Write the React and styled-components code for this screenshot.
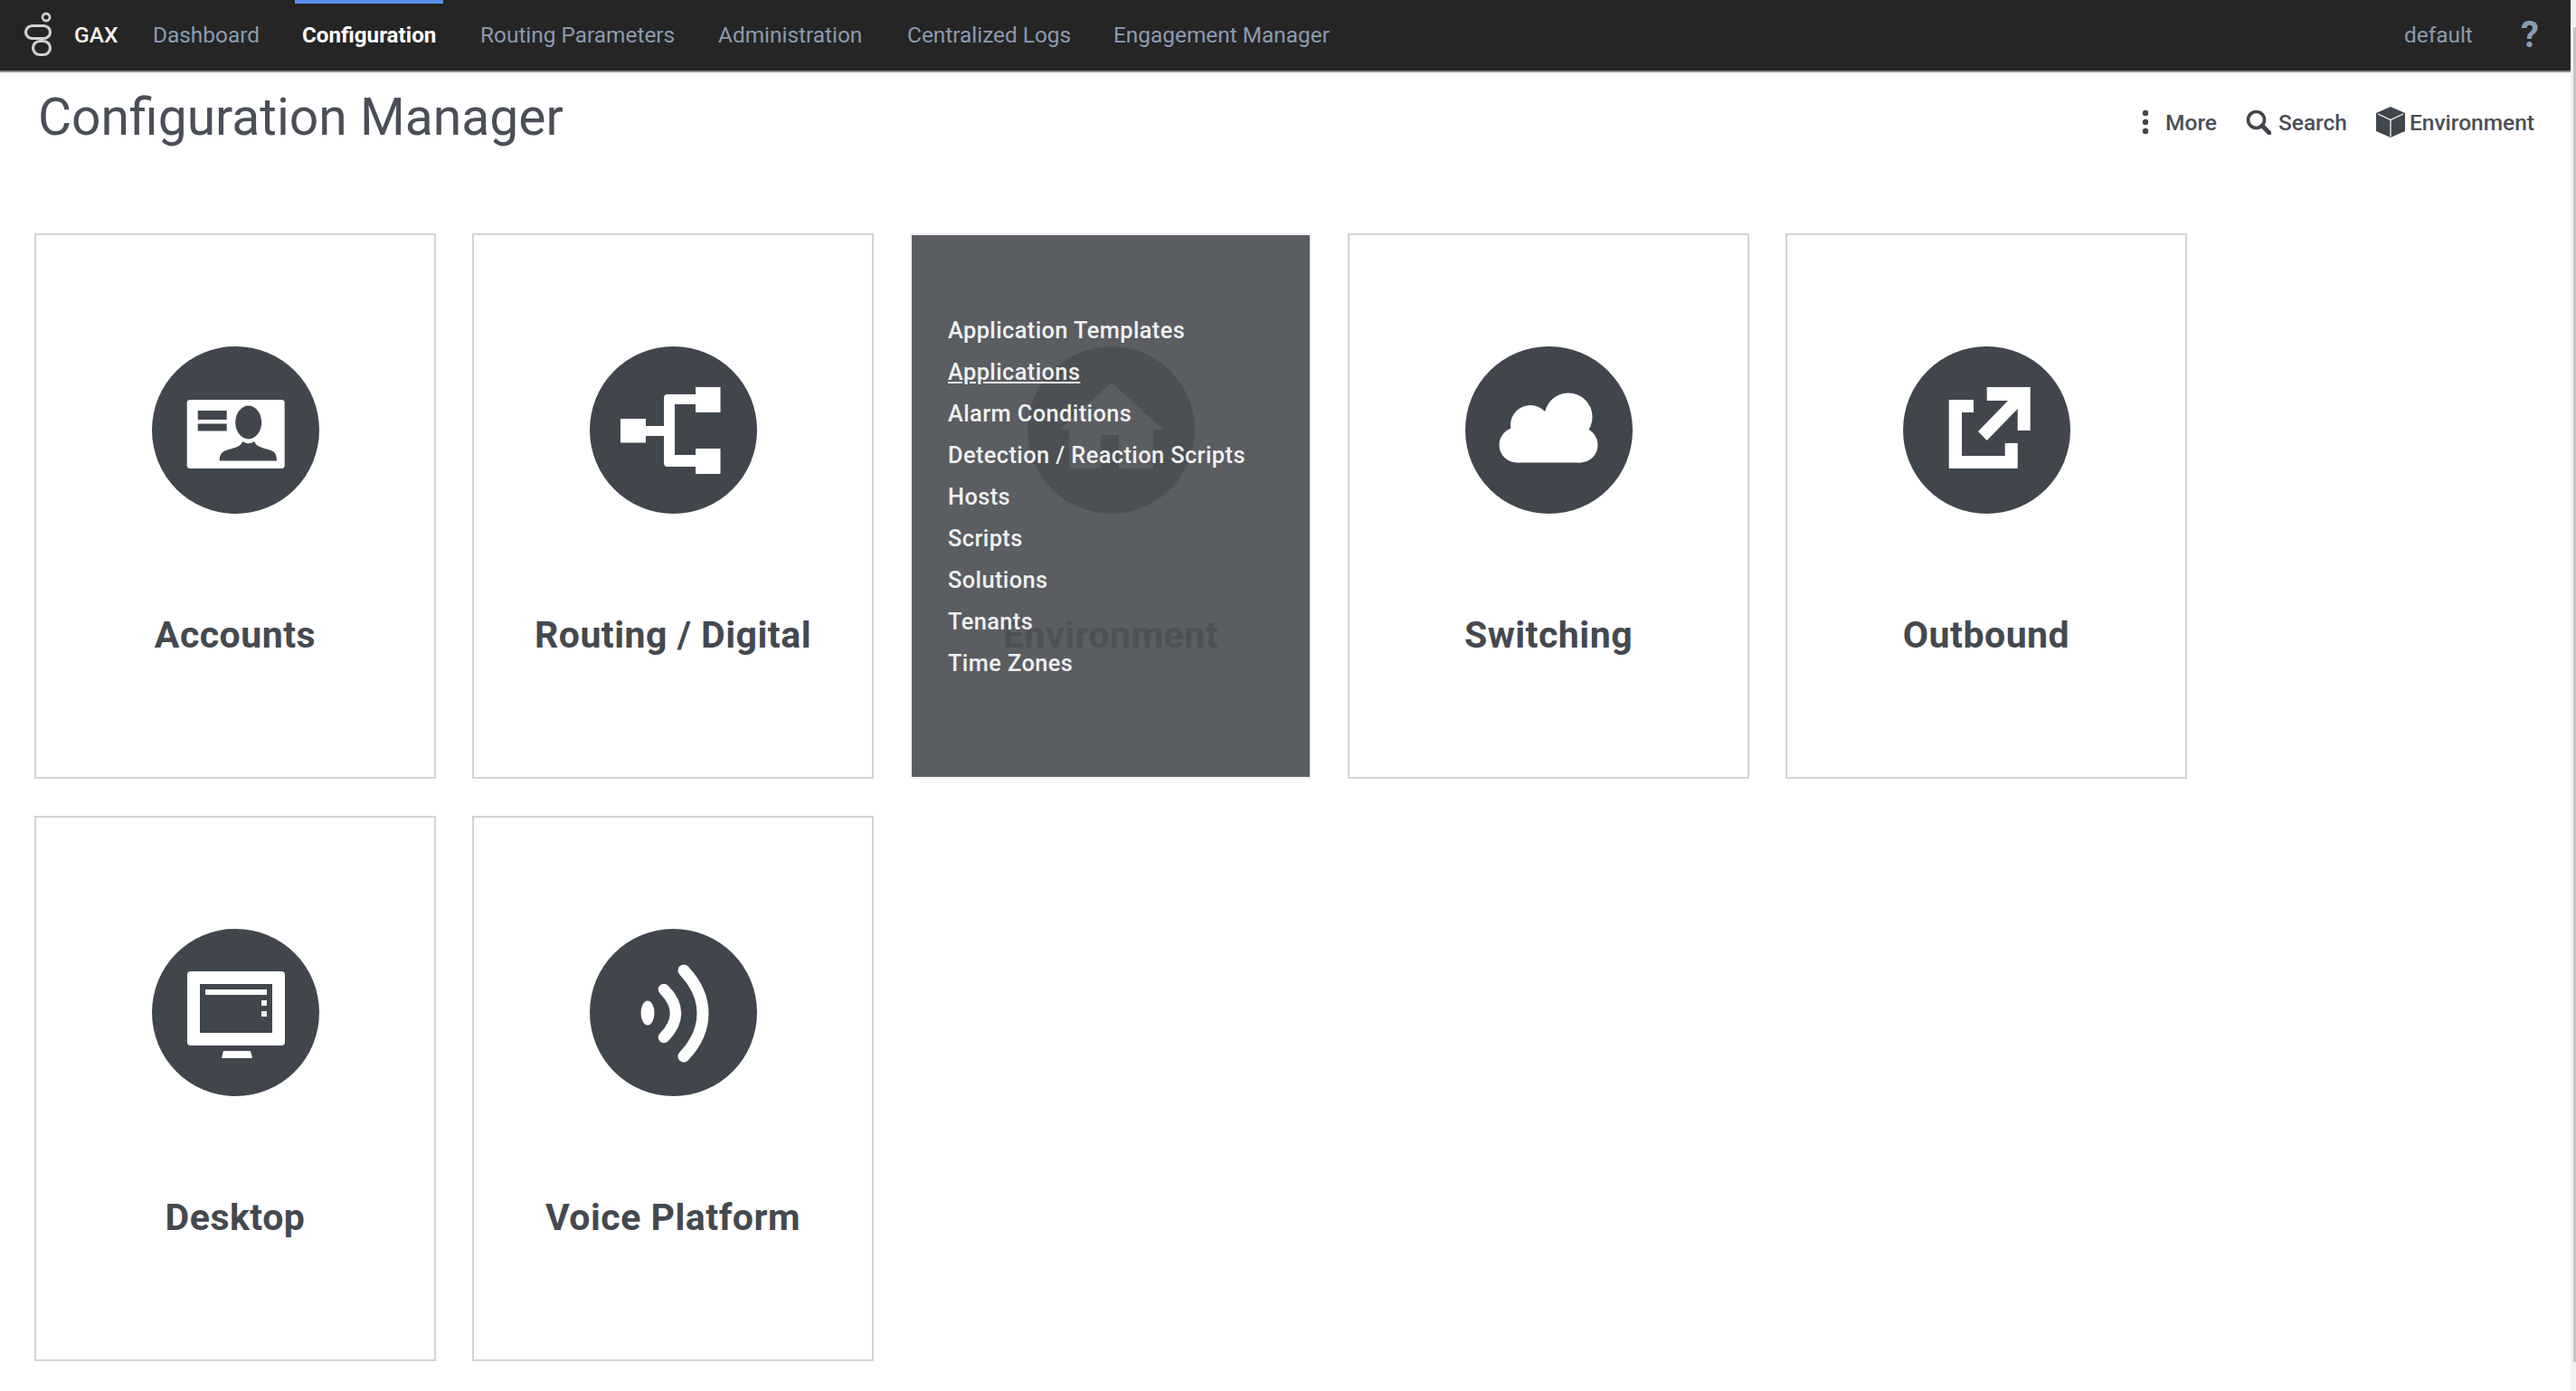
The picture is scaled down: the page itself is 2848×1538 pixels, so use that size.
import React from 'react';
import styled, { createGlobalStyle } from 'styled-components';

const GlobalStyle = createGlobalStyle`
  html, body {
    margin: 0;
    padding: 0;
    height: 100%;
    overflow: hidden;
    background: #fff;
    font-family: Roboto, "Liberation Sans", sans-serif;
  }
`;

const NAV_ITEMS = [
  { label: 'Dashboard', x: 169 },
  { label: 'Configuration', x: 334, active: true },
  { label: 'Routing Parameters', x: 531 },
  { label: 'Administration', x: 794 },
  { label: 'Centralized Logs', x: 1003 },
  { label: 'Engagement Manager', x: 1231 },
];

const ENV_LINKS = [
  'Application Templates',
  'Applications',
  'Alarm Conditions',
  'Detection / Reaction Scripts',
  'Hosts',
  'Scripts',
  'Solutions',
  'Tenants',
  'Time Zones',
];

function GenesysLogo() {
  return (
    <LogoSvg viewBox="0 0 36 52" fill="none" stroke="#d0d0d0" strokeWidth="3.2">
      <circle cx="27" cy="8" r="4" strokeWidth="2.8" />
      <rect x="4.5" y="17.5" width="27" height="14" rx="7" />
      <rect x="12.5" y="34.5" width="19" height="15" rx="7.5" />
    </LogoSvg>
  );
}

function AccountsIcon() {
  return (
    <g>
      <rect x="38.7" y="59" width="108" height="76" rx="3.5" fill="#fff" />
      <rect x="50.7" y="71" width="32" height="10" fill="#41464d" />
      <rect x="50.7" y="85.5" width="32" height="8" fill="#41464d" />
      <ellipse cx="106.7" cy="84" rx="14.5" ry="18.5" fill="#41464d" />
      <path
        d="M74.7 126.5c0-6 1.5-9 6-11 5-2 13-3.500 17-6.500l3-4c3 3 9 3 12 0l3 4c4 3 12 4.500 17 6.500 4 2 5 5 5.300 11z"
        fill="#41464d"
      />
    </g>
  );
}

function RoutingIcon() {
  return (
    <g fill="#fff">
      <rect x="34" y="80" width="28" height="26.500" />
      <rect x="62" y="88" width="22" height="11" />
      <path d="M117 53H86q-4 0-4 4v72q0 4 4 4h31v-13H94V64h23z" />
      <rect x="117" y="45" width="27.500" height="28" />
      <rect x="117" y="113" width="27.500" height="28" />
    </g>
  );
}

function CloudIcon() {
  return (
    <g fill="#fff">
      <circle cx="114" cy="78" r="26.500" />
      <circle cx="72" cy="87" r="22" />
      <circle cx="57" cy="109" r="19.500" />
      <circle cx="127" cy="109" r="19.500" />
      <rect x="57" y="85" width="70" height="43.500" />
    </g>
  );
}

function OutboundIcon() {
  return (
    <g fill="#fff">
      <path d="M50.700 59H78v14H65v48h47.700v-14h14v28h-76z" />
      <path d="M92.700 45h48v48h-14V69l-34 35-9.700-10 33-34H92.700z" />
    </g>
  );
}

function DesktopIcon() {
  return (
    <g>
      <rect x="39" y="47" width="108" height="82" rx="4" fill="#fff" />
      <rect x="53" y="61" width="80" height="54" fill="#41464d" />
      <rect x="59" y="67" width="68" height="6" fill="#fff" />
      <rect x="121" y="79" width="6" height="6" fill="#fff" />
      <rect x="121" y="91" width="6" height="6" fill="#fff" />
      <path d="M79 135h30l2 8H77z" fill="#fff" />
    </g>
  );
}

function VoiceIcon() {
  return (
    <g>
      <ellipse cx="64" cy="93" rx="7.500" ry="13.500" fill="#fff" />
      <path d="M82 67q13 13 13 26.500T82 120" fill="none" stroke="#fff" strokeWidth="12.500" strokeLinecap="round" />
      <path d="M104 46q21 22 21 47.500T104 141" fill="none" stroke="#fff" strokeWidth="13" strokeLinecap="round" />
    </g>
  );
}

function HouseIcon() {
  return (
    <path
      d="M93 40l57 52h-11v43h-38V98H81v37H46V92H35z"
      fill="#fff"
    />
  );
}

const CARDS = [
  { title: 'Accounts', icon: <AccountsIcon /> },
  { title: 'Routing / Digital', icon: <RoutingIcon /> },
  { title: 'Environment', icon: <HouseIcon />, links: ENV_LINKS },
  { title: 'Switching', icon: <CloudIcon /> },
  { title: 'Outbound', icon: <OutboundIcon /> },
  { title: 'Desktop', icon: <DesktopIcon /> },
  { title: 'Voice Platform', icon: <VoiceIcon /> },
];

function Card({ title, icon, links }) {
  return (
    <CardBox $hovered={!!links}>
      <CircleSvg viewBox="0 0 185 185">
        <circle cx="92.500" cy="92.500" r="92.500" fill="#41464d" />
        {icon}
      </CircleSvg>
      <CardTitle>{title}</CardTitle>
      {links && (
        <Overlay>
          {links.map((link) => (
            <OverlayLink key={link} $underline={link === 'Applications'}>
              {link}
            </OverlayLink>
          ))}
        </Overlay>
      )}
    </CardBox>
  );
}

export default function App() {
  return (
    <Page>
      <GlobalStyle />
      <TopBar>
        <GenesysLogo />
        <Brand>GAX</Brand>
        {NAV_ITEMS.map((item) => (
          <NavItem key={item.label} $x={item.x} $active={item.active}>
            {item.label}
          </NavItem>
        ))}
        <UserName>default</UserName>
        <HelpMark>?</HelpMark>
      </TopBar>

      <Title>Configuration Manager</Title>

      <Actions>
        <ActionItem $gap={32}>
          <DotsSvg viewBox="0 0 8 28" fill="#41464d">
            <circle cx="4" cy="4" r="3.200" />
            <circle cx="4" cy="14" r="3.200" />
            <circle cx="4" cy="24" r="3.200" />
          </DotsSvg>
          <ActionText $left={18}>More</ActionText>
        </ActionItem>
        <ActionItem $gap={32}>
          <IconSvg viewBox="0 0 28 28" width="28" height="28" fill="none" stroke="#41464d">
            <circle cx="11.500" cy="11.500" r="9" strokeWidth="3.600" />
            <path d="M18 18l8 8" strokeWidth="5" strokeLinecap="round" />
          </IconSvg>
          <ActionText $left={8}>Search</ActionText>
        </ActionItem>
        <ActionItem>
          <IconSvg viewBox="0 0 32 34" width="32" height="34">
            <path d="M16 0 32 7v20l-16 7L0 27V7z" fill="#41464d" />
            <path d="M2 8l14 6.500L30 8M16 14.500V33" fill="none" stroke="#fff" strokeWidth="1.200" />
          </IconSvg>
          <ActionText $left={5}>Environment</ActionText>
        </ActionItem>
      </Actions>

      <CardGrid>
        {CARDS.map((card) => (
          <Card key={card.title} {...card} />
        ))}
      </CardGrid>

      <ScrollTrack>
        <ScrollThumb />
      </ScrollTrack>
    </Page>
  );
}

const Page = styled.div`
  position: relative;
  width: 2848px;
  height: 1538px;
  overflow: hidden;
  background: #fff;
`;

const TopBar = styled.div`
  position: absolute;
  top: 0;
  left: 0;
  width: 2842px;
  height: 78px;
  background: #252525;
  border-bottom: 2px solid #8a8a8a;
`;

const LogoSvg = styled.svg`
  position: absolute;
  left: 24px;
  top: 11px;
  width: 36px;
  height: 52px;
`;

const Brand = styled.span`
  position: absolute;
  left: 82px;
  top: 24px;
  font-size: 24.5px;
  line-height: 30px;
  font-weight: 500;
  color: #f2f2f2;
`;

const NavItem = styled.span`
  position: absolute;
  left: ${(p) => p.$x}px;
  top: 24px;
  height: 30px;
  font-size: ${(p) => (p.$active ? 24.2 : 24.4)}px;
  line-height: 30px;
  font-weight: ${(p) => (p.$active ? 700 : 400)};
  color: ${(p) => (p.$active ? '#ffffff' : '#8b9bb0')};
  white-space: nowrap;

  &::before {
    content: ${(p) => (p.$active ? "''" : 'none')};
    position: absolute;
    top: -24px;
    left: -8px;
    right: -8px;
    height: 4px;
    background: #5b92ee;
  }
`;

const UserName = styled.span`
  position: absolute;
  left: 2658px;
  top: 24px;
  font-size: 24.4px;
  line-height: 30px;
  color: #8b9bb0;
`;

const HelpMark = styled.span`
  position: absolute;
  left: 2787px;
  top: 17px;
  font-size: 40px;
  line-height: 44px;
  font-weight: 700;
  color: #8b9bb0;
`;

const Title = styled.h1`
  position: absolute;
  left: 42px;
  top: 96px;
  margin: 0;
  font-size: 57px;
  line-height: 68px;
  font-weight: 400;
  color: #4a4f57;
  white-space: nowrap;
`;

const Actions = styled.div`
  position: absolute;
  top: 117px;
  right: 46px;
  display: flex;
  align-items: center;
  height: 36px;
`;

const ActionItem = styled.div`
  display: flex;
  align-items: center;
  margin-right: ${(p) => p.$gap || 0}px;
`;

const DotsSvg = styled.svg`
  width: 8px;
  height: 28px;
`;

const IconSvg = styled.svg`
  display: block;
`;

const ActionText = styled.span`
  margin-left: ${(p) => p.$left}px;
  font-size: 24.5px;
  font-weight: 500;
  color: #4a4f57;
`;

const CardGrid = styled.div`
  position: absolute;
  left: 38px;
  top: 258px;
  display: grid;
  grid-template-columns: repeat(5, 444px);
  grid-auto-rows: 603px;
  column-gap: 40px;
  row-gap: 41px;
`;

const CardBox = styled.div`
  position: relative;
  box-sizing: border-box;
  border: 2px solid ${(p) => (p.$hovered ? '#f2f2f2' : '#d3d3d3')};
  background: #fff;
`;

const CircleSvg = styled.svg`
  position: absolute;
  left: 50%;
  top: 123px;
  width: 185px;
  height: 185px;
  margin-left: -92.5px;
`;

const CardTitle = styled.div`
  position: absolute;
  left: 0;
  right: 0;
  top: 417px;
  text-align: center;
  font-size: 41px;
  letter-spacing: 0.5px;
  line-height: 50px;
  font-weight: 700;
  color: #44494f;
`;

const Overlay = styled.div`
  position: absolute;
  inset: 0;
  box-sizing: border-box;
  padding: 82px 0 0 40px;
  background: rgba(78, 81, 86, 0.93);
`;

const OverlayLink = styled.div`
  height: 46px;
  font-size: 25.4px;
  letter-spacing: 0.4px;
  line-height: 46px;
  font-weight: 500;
  color: #f0f0f0;
  white-space: nowrap;
  text-decoration: ${(p) => (p.$underline ? 'underline' : 'none')};
`;

const ScrollTrack = styled.div`
  position: absolute;
  top: 0;
  right: 0;
  width: 6px;
  height: 1538px;
  background: #f1f1f1;
`;

const ScrollThumb = styled.div`
  position: absolute;
  top: 30px;
  right: 0;
  width: 3px;
  height: 1476px;
  background: #c4c4c4;
`;
